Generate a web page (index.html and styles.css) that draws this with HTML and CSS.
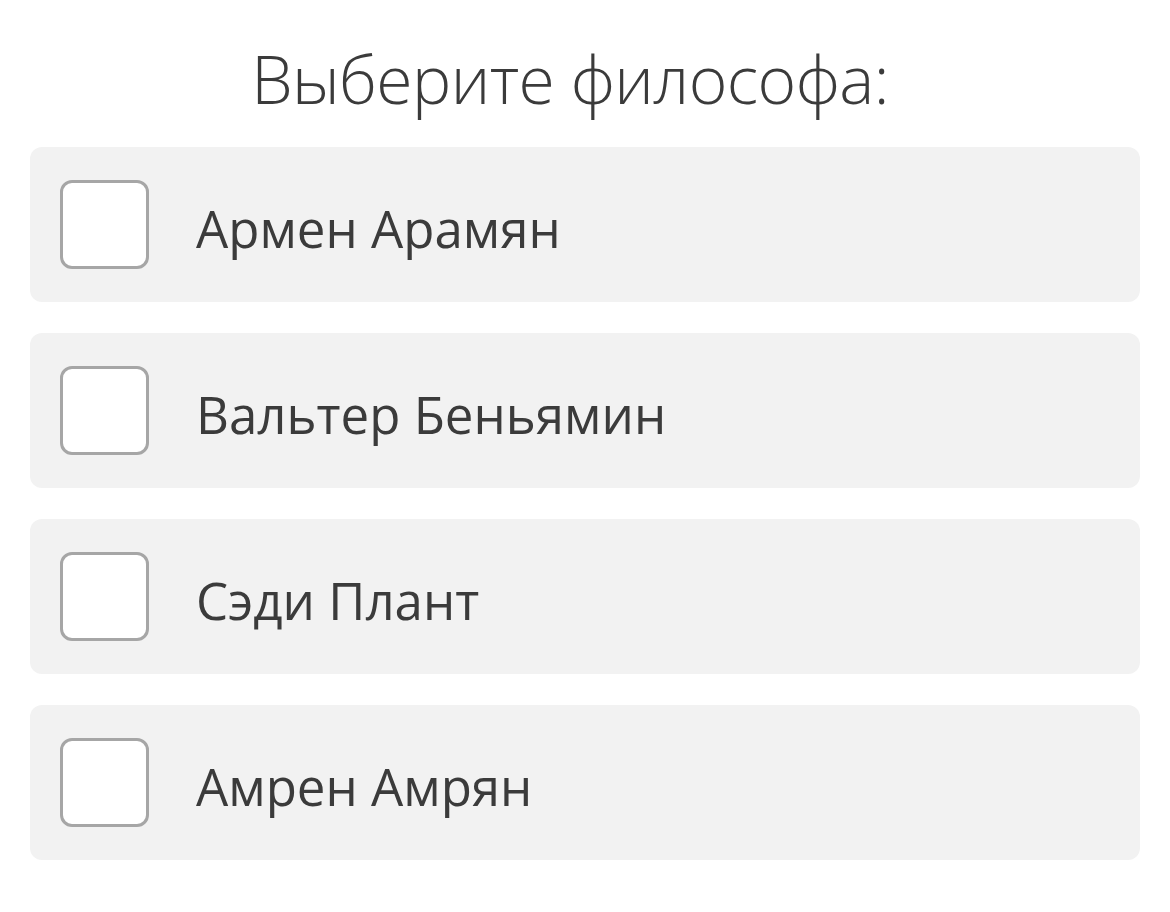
FILE: index.html
```html
<!DOCTYPE html>
<html lang="ru">

<head>
    <meta charset="UTF-8">
    <meta name="viewport" content="width=device-width, initial-scale=1.0">
    <title>Выберите философа</title>
    <link rel="stylesheet" href="styles.css">
</head>

<body>
    <h1 class="question">Выберите философа:</h1>
    <div class="options">
        <label class="option">
            <input type="checkbox" class="check">
            <span class="option-text">Армен Арамян</span>
        </label>
        <label class="option">
            <input type="checkbox" class="check">
            <span class="option-text">Вальтер Беньямин</span>
        </label>
        <label class="option">
            <input type="checkbox" class="check">
            <span class="option-text">Сэди Плант</span>
        </label>
        <label class="option">
            <input type="checkbox" class="check">
            <span class="option-text">Амрен Амрян</span>
        </label>
    </div>
</body>

</html>
```

FILE: styles.css
```css
:root {
    --text-color: #3b3b3b;
    --card-bg: #f2f2f2;
    --check-border: #a6a6a6;
}

body {
    margin: 0;
    padding: 0 30px;
    background: #ffffff;
    color: var(--text-color);
    font-family: "Open Sans", "Noto Sans", sans-serif;
}

.question {
    margin: 0 0 28px;
    padding: 38px 30px 0 0;
    text-align: center;
    font-size: 66px;
    font-weight: 300;
    line-height: 81px;
    letter-spacing: -0.6px;
}

.options {
    display: flex;
    flex-direction: column;
    gap: 31px;
}

.option {
    display: flex;
    align-items: center;
    height: 155px;
    padding-left: 30px;
    background-color: var(--card-bg);
    border-radius: 12px;
    cursor: pointer;
}

.check {
    appearance: none;
    margin: 0;
    width: 89px;
    height: 89px;
    box-sizing: border-box;
    border: 3px solid var(--check-border);
    border-radius: 12px;
    background: #ffffff;
    cursor: pointer;
}

.option-text {
    margin: 6px 0 0 47px;
    font-size: 51px;
    font-weight: 400;
}
```
